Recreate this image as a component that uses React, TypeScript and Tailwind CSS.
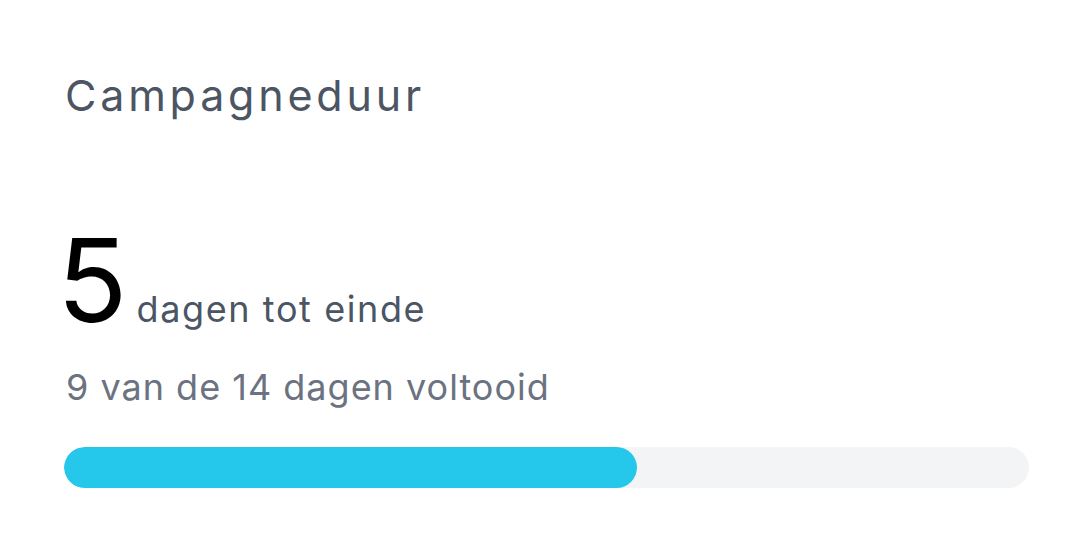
export default function App() {
  return (
    <div className="w-[1092px] h-[560px] bg-white px-[64px] pt-[75px]" style={{ fontFamily: "Inter, 'Noto Sans', sans-serif" }}>
      <h2 className="text-[43px] leading-[40px] font-normal tracking-[3.8px] text-[#4b5563] pl-[1px]">Campagneduur</h2>
      <div className="mt-[107px] flex items-baseline">
        <span className="ml-[-7px] text-[116px] leading-[116px] text-black">5</span>
        <span className="ml-[9px] text-[36px] leading-[36px] tracking-[1.6px] text-[#4b5563]">dagen tot einde</span>
      </div>
      <p className="mt-[29px] text-[36px] leading-[40px] tracking-[1px] text-[#6b7280] pl-[2px]">9 van de 14 dagen voltooid</p>
      <div className="mt-[40px] h-[41px] w-[965px] rounded-full bg-[#f3f4f6] overflow-hidden">
        <div className="h-full w-[59.4%] rounded-full bg-[#25c8ea]" />
      </div>
    </div>
  );
}
